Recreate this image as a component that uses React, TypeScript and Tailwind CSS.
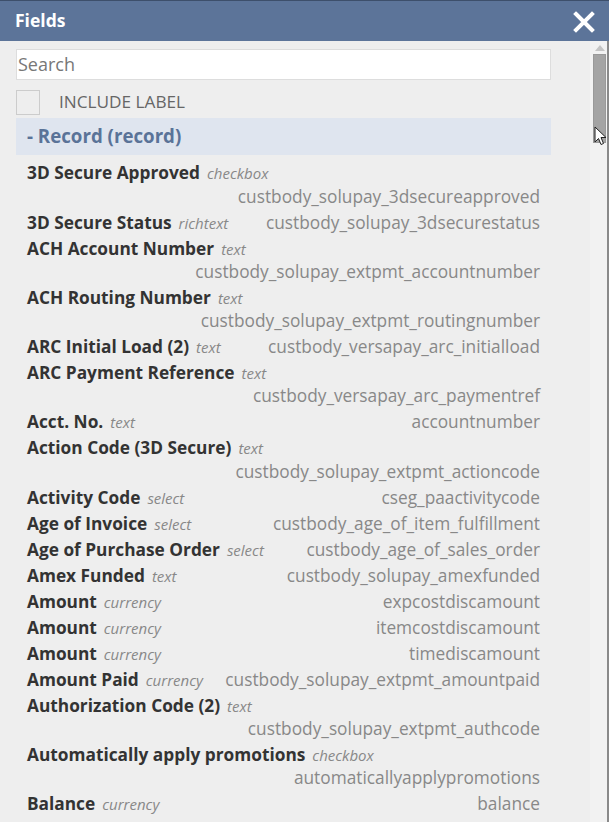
import React from "react";

type Row = { label: string; type: string; id: string };

const rows: Row[] = [
  { label: "3D Secure Approved", type: "checkbox", id: "custbody_solupay_3dsecureapproved" },
  { label: "3D Secure Status", type: "richtext", id: "custbody_solupay_3dsecurestatus" },
  { label: "ACH Account Number", type: "text", id: "custbody_solupay_extpmt_accountnumber" },
  { label: "ACH Routing Number", type: "text", id: "custbody_solupay_extpmt_routingnumber" },
  { label: "ARC Initial Load (2)", type: "text", id: "custbody_versapay_arc_initialload" },
  { label: "ARC Payment Reference", type: "text", id: "custbody_versapay_arc_paymentref" },
  { label: "Acct. No.", type: "text", id: "accountnumber" },
  { label: "Action Code (3D Secure)", type: "text", id: "custbody_solupay_extpmt_actioncode" },
  { label: "Activity Code", type: "select", id: "cseg_paactivitycode" },
  { label: "Age of Invoice", type: "select", id: "custbody_age_of_item_fulfillment" },
  { label: "Age of Purchase Order", type: "select", id: "custbody_age_of_sales_order" },
  { label: "Amex Funded", type: "text", id: "custbody_solupay_amexfunded" },
  { label: "Amount", type: "currency", id: "expcostdiscamount" },
  { label: "Amount", type: "currency", id: "itemcostdiscamount" },
  { label: "Amount", type: "currency", id: "timediscamount" },
  { label: "Amount Paid", type: "currency", id: "custbody_solupay_extpmt_amountpaid" },
  { label: "Authorization Code (2)", type: "text", id: "custbody_solupay_extpmt_authcode" },
  { label: "Automatically apply promotions", type: "checkbox", id: "automaticallyapplypromotions" },
  { label: "Balance", type: "currency", id: "balance" },
];

export default function App() {
  return (
    <div
      className="relative w-[609px] h-[822px] overflow-hidden bg-[#eeeeee] flex flex-col"
      style={{ fontFamily: '"Open Sans", "Liberation Sans", sans-serif' }}
    >
      <div className="h-[41px] shrink-0 bg-[#5c7499] border-t border-[#3d4f6b] flex items-center justify-between pl-[15px] pr-[14px]">
        <span className="text-white font-bold text-[17.5px] leading-none">Fields</span>
        <svg width="22" height="22" viewBox="0 0 22 22" className="mt-[1px]">
          <path d="M3 3 L19 19 M19 3 L3 19" stroke="white" strokeWidth="4" strokeLinecap="square" />
        </svg>
      </div>
      <div className="flex-1 flex min-h-0">
        <div className="w-[590px] pl-[16px] pr-[39px] pt-[8px] overflow-hidden">
          <div className="h-[31px] bg-white border border-[#dddddd] flex items-center px-[1px] text-[18px] text-[#777777]">
            Search
          </div>
          <div className="h-[38px] flex items-start pt-[10px]">
            <div className="w-[24px] h-[25px] border border-[#cccccc] bg-[#eeeeee]" />
            <span className="ml-[19px] text-[17.2px] leading-[24px] text-[#666666]">INCLUDE LABEL</span>
          </div>
          <div className="h-[37px] bg-[#dfe5ef] flex items-center pl-[11px] text-[18.7px] font-bold text-[#5a7398]">
            - Record (record)
          </div>
          <div className="pt-[5px] px-[11px]">
            {rows.map((r, i) => (
              <div key={i} className="flex flex-wrap items-baseline py-[1.35px]">
                <span className="text-[17.3px] leading-[23.3px] font-bold text-[#333333]">{r.label}</span>
                <span className="ml-[7px] text-[15px] leading-none italic text-[#888888]">{r.type}</span>
                <span className="ml-auto pl-[12px] text-[17.3px] leading-[23.3px] text-[#888888]">{r.id}</span>
              </div>
            ))}
          </div>
        </div>
        <div className="w-[17px] bg-[#f2f2f2] flex flex-col items-center pt-[4px] pl-[2px]">
          <svg width="10" height="6" viewBox="0 0 10 6">
            <path d="M5 0 L10 6 L0 6 Z" fill="#c4c4c4" />
          </svg>
          <div className="mt-[3px] w-[13px] h-[89px] bg-[#a4a4a4] border border-[#999999]" />
        </div>
        <div className="w-[2px] bg-[#8a8a8a]" />
      </div>
      <svg
        className="absolute left-[594px] top-[126px]"
        width="13"
        height="20"
        viewBox="0 0 13 20"
      >
        <path d="M1 1 L1 16 L4.5 12.5 L7 18.5 L9.5 17.5 L7 11.5 L12 11.5 Z" fill="white" stroke="#222" strokeWidth="1" />
      </svg>
    </div>
  );
}
